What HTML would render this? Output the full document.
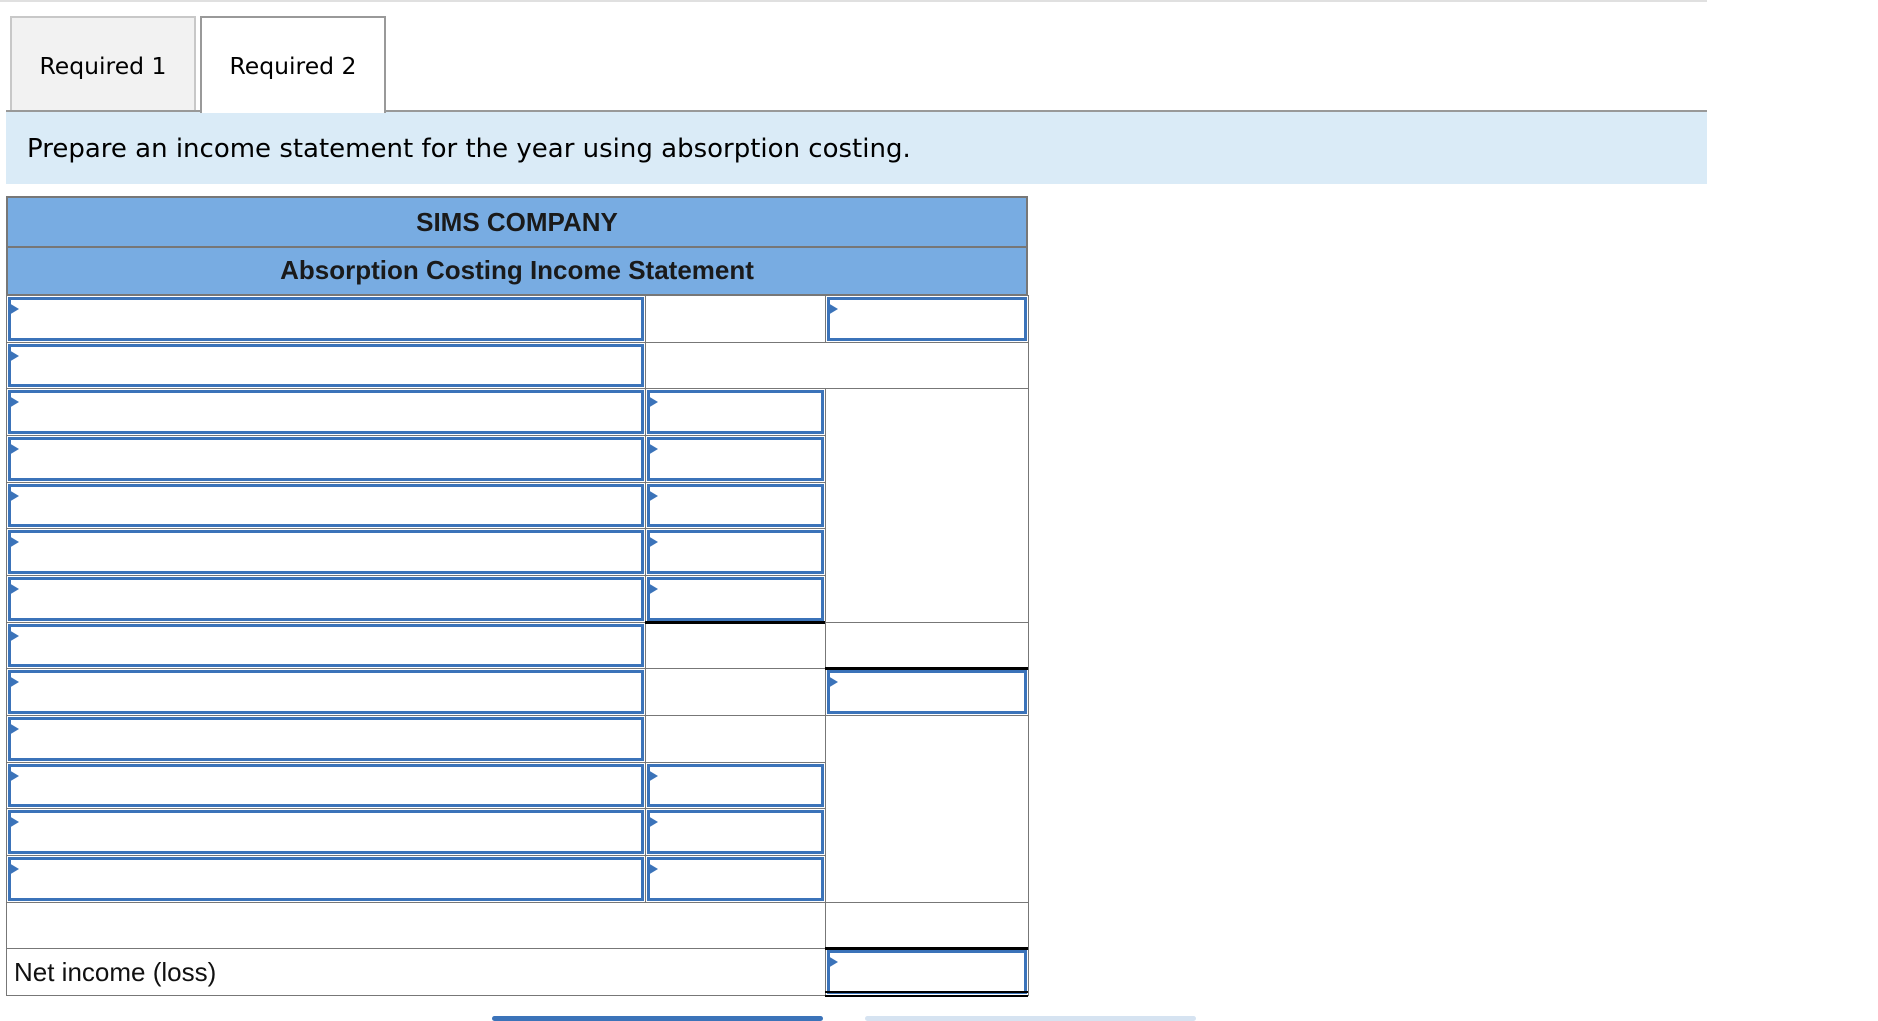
<!DOCTYPE html>
<html><head><meta charset="utf-8">
<style>
*{margin:0;padding:0;box-sizing:border-box}
body{width:1878px;height:1018px;background:#fff;position:relative;overflow:hidden;font-family:"DejaVu Sans","Liberation Sans",sans-serif}
.a{position:absolute}
.tab{position:absolute;top:16px;height:96px;border:2px solid #c8c8c8;border-bottom:none;font-size:23.5px;color:#000;text-align:center;line-height:96px}
.hd{position:absolute;left:6px;width:1022px;background:#78ace2;border:2px solid #777;font-family:"Liberation Sans",Arial,sans-serif;font-weight:bold;font-size:26px;color:#1a1a1a;text-align:center}
.c{position:absolute;border:1px solid #777;background:#fff}
.in{position:absolute;border:3px solid #3b73b9;background:#fff}
.in:before{content:"";position:absolute;left:-2px;top:3px;border-left:10px solid #3b73b9;border-top:6px solid transparent;border-bottom:6px solid transparent}
.bk{position:absolute;height:3px;background:#000}
</style></head><body>
<div class="a" style="left:0;top:0;width:1707px;height:2px;background:#e0e0e0"></div>
<div class="tab" style="left:10px;width:186px;background:#f2f2f2">Required 1</div>
<div class="tab" style="left:200px;width:186px;background:#fff;border-color:#999;height:97px;z-index:2">Required 2</div>
<div class="a" style="left:6px;top:110px;width:1701px;height:2px;background:#999"></div>
<div class="a" style="left:6px;top:112px;width:1701px;height:72px;background:#daebf7;font-size:26px;line-height:74px;padding-left:21px;color:#000">Prepare an income statement for the year using absorption costing.</div>
<div class="hd" style="top:196px;height:52px;line-height:48px">SIMS COMPANY</div>
<div class="hd" style="top:248px;height:48px;line-height:44px;border-top:none">Absorption Costing Income Statement</div>
<div id="t"></div>
<div class="a" style="left:6px;top:948px;width:820px;height:48px;font-family:'Liberation Sans',Arial,sans-serif;font-size:26px;line-height:48px;padding-left:8px;color:#111">Net income (loss)</div>
<div class="a" style="left:492px;top:1016px;width:331px;height:5px;background:#3b73b9;border-radius:3px"></div>
<div class="a" style="left:865px;top:1016px;width:331px;height:5px;background:#d6e3f1;border-radius:3px"></div>
<script>
var X=[6,645,825,1028];
function T(i){return Math.round(295+i*46.67);}
var h='';
function cell(x0,x1,r0,r1,inp){
 h+='<div class="c" style="left:'+x0+'px;top:'+T(r0)+'px;width:'+(x1-x0+1)+'px;height:'+(T(r1)-T(r0)+1)+'px"></div>';
 if(inp) h+='<div class="in" style="left:'+(x0+2)+'px;top:'+(T(r0)+2)+'px;width:'+(x1-x0-3)+'px;height:'+(T(r1)-T(r0)-3)+'px"></div>';
}
for(var r=0;r<13;r++) cell(X[0],X[1],r,r+1,true);
cell(X[1],X[2],0,1,false);
cell(X[1],X[3],1,2,false);
for(r=2;r<7;r++) cell(X[1],X[2],r,r+1,true);
cell(X[1],X[2],7,8,false);cell(X[1],X[2],8,9,false);cell(X[1],X[2],9,10,false);
for(r=10;r<13;r++) cell(X[1],X[2],r,r+1,true);
cell(X[2],X[3],0,1,true);
cell(X[2],X[3],2,7,false);
cell(X[2],X[3],7,8,false);
cell(X[2],X[3],8,9,true);
cell(X[2],X[3],9,13,false);
cell(X[0],X[2],13,14,false);cell(X[2],X[3],13,14,false);
cell(X[0],X[2],14,15,false);cell(X[2],X[3],14,15,true);
h+='<div class="bk" style="left:'+X[1]+'px;top:'+(T(7)-1)+'px;width:'+(X[2]-X[1])+'px"></div>';
h+='<div class="bk" style="left:'+X[2]+'px;top:'+(T(8)-1)+'px;width:'+(X[3]-X[2])+'px"></div>';
h+='<div class="bk" style="left:'+X[2]+'px;top:'+(T(14)-1)+'px;width:'+(X[3]-X[2])+'px"></div>';
h+='<div class="bk" style="left:'+X[2]+'px;top:'+(T(15)-4)+'px;width:'+(X[3]-X[2])+'px;height:2px"></div>';
h+='<div class="bk" style="left:'+X[2]+'px;top:'+(T(15))+'px;width:'+(X[3]-X[2])+'px;height:2px"></div>';
document.getElementById('t').innerHTML=h;
</script>
</body></html>
